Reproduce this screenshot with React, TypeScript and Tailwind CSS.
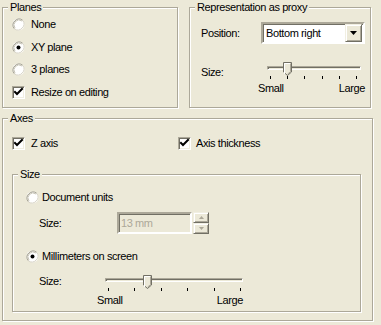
import React from 'react';

const Group = ({ title, className, children }: { title: string; className: string; children?: React.ReactNode }) => (
  <div className={`relative border border-[#aca899] shadow-[1px_1px_0_#fff,inset_1px_1px_0_#fff] ${className}`}>
    <span className="absolute left-[5px] top-[-7px] bg-[#ece9d8] px-[2px] leading-[13px]">{title}</span>
    {children}
  </div>
);

const Radio = ({ checked }: { checked?: boolean }) => (
  <svg width="13" height="13" viewBox="0 0 13 13" className="shrink-0">
    <circle cx="6.5" cy="6.5" r="6" fill="#fff" />
    <path d="M2.3 10.7 A6 6 0 0 1 10.7 2.3" stroke="#9d9a8b" fill="none" />
    <path d="M3 10 A5 5 0 0 1 10 3" stroke="#c9c6b8" fill="none" />
    <path d="M10.7 2.3 A6 6 0 0 1 2.3 10.7" stroke="#d6d3c5" fill="none" />
    {checked && <circle cx="6.5" cy="6.5" r="2" fill="#000" />}
  </svg>
);

const Check = ({ checked }: { checked?: boolean }) => (
  <div className="relative h-[13px] w-[13px] shrink-0 border border-t-[#aca899] border-l-[#aca899] border-b-white border-r-white bg-white shadow-[inset_1px_1px_0_#716f64,inset_-1px_-1px_0_#f1efe2]">
    {checked && (
      <svg width="13" height="13" viewBox="0 0 13 13" className="absolute left-[-1px] top-[-1px]">
        <path d="M3 6 L5 8 L10 3" stroke="#000" strokeWidth="2" fill="none" strokeLinecap="square" />
      </svg>
    )}
  </div>
);

const Thumb = ({ left, top }: { left: number; top: number }) => (
  <svg
    width="9"
    height="14"
    viewBox="0 0 9 14"
    className="absolute"
    style={{ left, top }}
  >
    <path d="M0.5 0.5 H8.5 V10 L4.5 13.5 L0.5 10 Z" fill="#ece9d8" stroke="#716f64" />
    <path d="M1.5 12 V1.5 H7.5" stroke="#fff" fill="none" />
    <path d="M7.5 1.5 V9.6 L4.5 12.2" stroke="#aca899" fill="none" />
  </svg>
);

const Ticks = () => (
  <>
    {[0, 1, 2, 3, 4, 5].map((i) => (
      <div key={i} className="h-[3px] w-px bg-black" />
    ))}
  </>
);

const Track = ({ className }: { className: string }) => (
  <div className={`h-[4px] border border-t-[#aca899] border-l-[#aca899] border-b-white border-r-white bg-[#ece9d8] shadow-[inset_1px_1px_0_#716f64] ${className}`} />
);

const Spin = ({ up }: { up?: boolean }) => (
  <div className="flex h-[11px] w-[16px] items-center justify-center border border-t-[#f1efe2] border-l-[#f1efe2] border-b-[#716f64] border-r-[#716f64] bg-[#ece9d8] shadow-[inset_1px_1px_0_#fff,inset_-1px_-1px_0_#aca899]">
    <svg width="5" height="3" viewBox="0 0 5 3">
      <path d={up ? 'M2.5 0 L5 3 L0 3 Z' : 'M0 0 L5 0 L2.5 3 Z'} fill="#aca899" />
    </svg>
  </div>
);

export default function App() {
  return (
    <div className="h-[325px] w-[381px] bg-[#ece9d8] pl-[2px] pt-[7px] font-['Liberation_Sans',Arial,sans-serif] text-[11px] leading-[13px] tracking-[-0.4px] text-black">
      <div className="flex gap-[11px]">
        <Group title="Planes" className="h-[101px] w-[176px]">
          <div className="flex flex-col gap-[9.5px] pl-[9px] pt-[10px]">
            <div className="flex h-[13px] items-center gap-[6px]">
              <Radio />
              <span>None</span>
            </div>
            <div className="flex h-[13px] items-center gap-[6px]">
              <Radio checked />
              <span>XY plane</span>
            </div>
            <div className="flex h-[13px] items-center gap-[6px]">
              <Radio />
              <span>3 planes</span>
            </div>
            <div className="flex h-[13px] items-center gap-[6px]">
              <Check checked />
              <span>Resize on editing</span>
            </div>
          </div>
        </Group>

        <Group title="Representation as proxy" className="h-[101px] w-[182px]">
          <div className="pl-[11px] pt-[14px]">
            <div className="flex items-center">
              <span className="w-[60px]">Position:</span>
              <div className="flex h-[22px] w-[104px] items-center border-2 border-t-[#aca899] border-l-[#aca899] border-b-white border-r-white bg-white shadow-[inset_1px_1px_0_#716f64]">
                <span className="flex-1 pl-[3px] pt-px">Bottom right</span>
                <div className="mr-px flex h-[18px] w-[17px] items-center justify-center border border-t-[#f1efe2] border-l-[#f1efe2] border-b-[#716f64] border-r-[#716f64] bg-[#ece9d8] shadow-[inset_1px_1px_0_#fff,inset_-1px_-1px_0_#aca899]">
                  <svg width="7" height="4" viewBox="0 0 7 4">
                    <path d="M0 0 H7 L3.5 4 Z" fill="#000" />
                  </svg>
                </div>
              </div>
            </div>
            <div className="mt-[22px] flex items-start">
              <span className="w-[57px]">Size:</span>
              <div className="relative w-[107px]">
                <Track className="ml-[9px] w-[94px]" />
                <Thumb left={25} top={-4} />
                <div className="ml-[12px] mt-[6px] flex w-[87px] justify-between">
                  <Ticks />
                </div>
                <div className="mt-[3px] flex justify-between">
                  <span>Small</span>
                  <span>Large</span>
                </div>
              </div>
            </div>
          </div>
        </Group>
      </div>

      <Group title="Axes" className="mt-[10px] h-[203px] w-[371px]">
        <div className="flex pl-[9px] pt-[18px]">
          <div className="flex w-[166px] items-center gap-[6px]">
            <Check checked />
            <span>Z axis</span>
          </div>
          <div className="flex items-center gap-[5px]">
            <Check checked />
            <span>Axis thickness</span>
          </div>
        </div>

        <Group title="Size" className="ml-[9px] mt-[24px] h-[138px] w-[349px]">
          <div className="pl-[13px] pt-[16px]">
            <div className="flex h-[13px] items-center gap-[3px]">
              <Radio />
              <span>Document units</span>
            </div>
            <div className="mt-[8px] flex items-center pl-[13px]">
              <span className="w-[78px]">Size:</span>
              <div className="flex h-[22px] w-[75px] items-center border-2 border-t-[#aca899] border-l-[#aca899] border-b-white border-r-white bg-[#ece9d8] shadow-[inset_1px_1px_0_#716f64] pl-[2px] text-[#aca899]">
                13 mm
              </div>
              <div className="ml-px flex flex-col">
                <Spin up />
                <Spin />
              </div>
            </div>
            <div className="mt-[16px] flex h-[13px] items-center gap-[3px]">
              <Radio checked />
              <span>Millimeters on screen</span>
            </div>
            <div className="mt-[12px] flex items-start pl-[13px]">
              <span className="w-[58px]">Size:</span>
              <div className="relative w-[146px] pt-[3px]">
                <Track className="ml-[8px] w-[138px]" />
                <Thumb left={46} top={0} />
                <div className="ml-[11px] mt-[6px] flex w-[133px] justify-between">
                  <Ticks />
                </div>
                <div className="mt-[3px] flex justify-between">
                  <span>Small</span>
                  <span>Large</span>
                </div>
              </div>
            </div>
          </div>
        </Group>
      </Group>
    </div>
  );
}
